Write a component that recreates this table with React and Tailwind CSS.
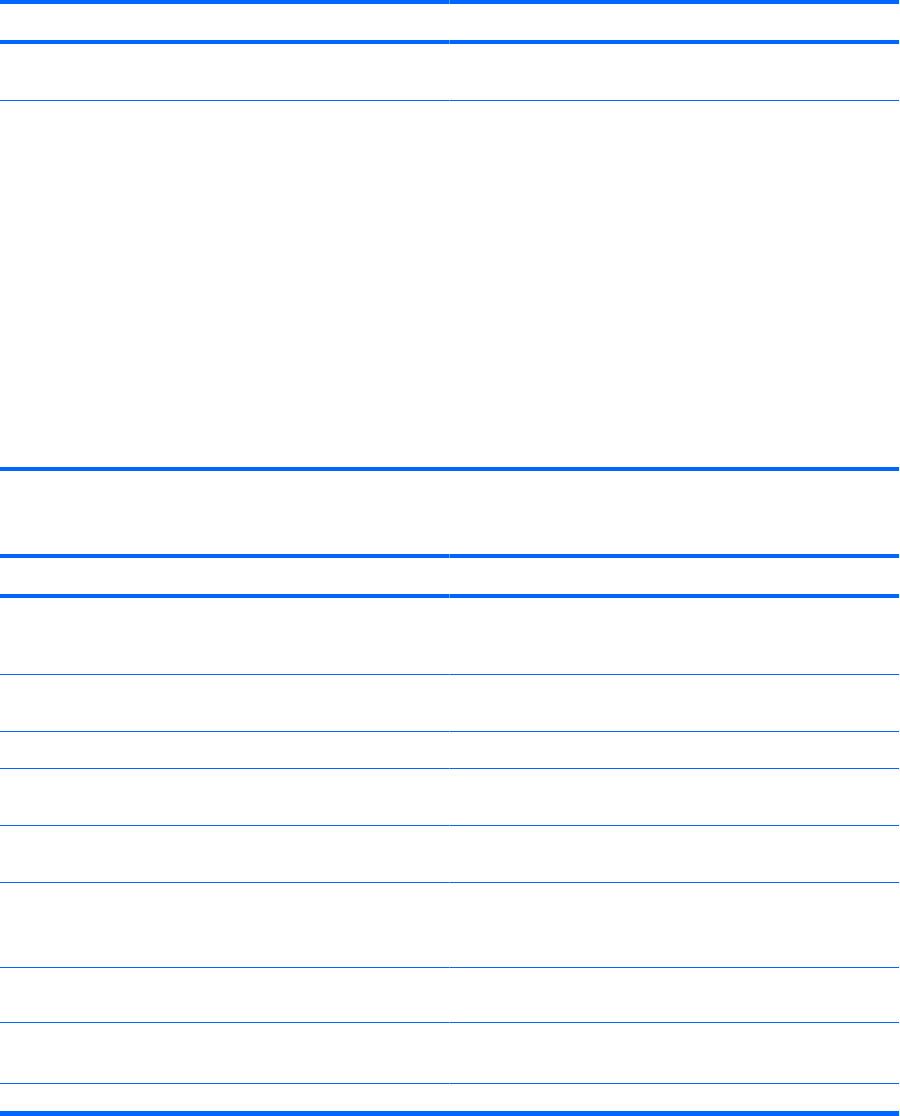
const Rule = ({ thick = 'h-px', split = true }) => (
    <div className={`flex w-[899px] ${split ? 'gap-px bg-[#5c9dff]' : 'bg-[#0066ff]'}`}>
        <div className={`${thick} w-[449px] bg-[#0066ff]`} />
        <div className={`${thick} w-[449px] bg-[#0066ff]`} />
    </div>
);

const Row = ({ h }) => (
    <div className={`flex w-[899px] ${h}`}>
        <div className="w-[449px]" />
        <div className="w-[450px]" />
    </div>
);

const App = () => {
    return (
        <div className="w-[900px] h-[1116px] bg-white flex flex-col font-['Liberation_Sans',sans-serif]">
            {/* first table */}
            <Rule thick="h-1" />
            <Row h="h-[36px]" />
            <Rule thick="h-1" />
            <Row h="h-[56px]" />
            <Rule />
            <Row h="h-[366px]" />
            <Rule thick="h-1" split={false} />

            {/* caption gap */}
            <div className="h-[83px]" />

            {/* second table */}
            <Rule thick="h-1" />
            <Row h="h-[36px]" />
            <Rule thick="h-1" />
            <Row h="h-[76px]" />
            <Rule />
            <Row h="h-[56px]" />
            <Rule />
            <Row h="h-[36px]" />
            <Rule />
            <Row h="h-[56px]" />
            <Rule />
            <Row h="h-[56px]" />
            <Rule />
            <Row h="h-[84px]" />
            <Rule />
            <Row h="h-[54px]" />
            <Rule />
            <Row h="h-[60px]" />
            <Rule />
            <Row h="h-[27px]" />
            <Rule thick="h-[5px]" split={false} />
        </div>
    );
};

export default App;
